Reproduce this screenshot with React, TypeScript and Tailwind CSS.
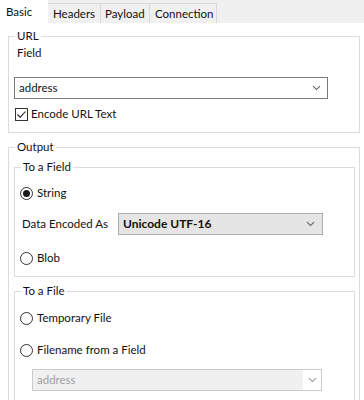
import React from "react";

const Chevron = ({ color = "#606060" }: { color?: string }) => (
  <svg width="9" height="6" viewBox="0 0 9 6" fill="none">
    <path d="M1 1.2 L4.5 4.6 L8 1.2" stroke={color} strokeWidth="1.1" />
  </svg>
);

const Radio = ({ checked, label }: { checked?: boolean; label: string }) => (
  <div className="flex items-center h-[16px]">
    <span className="w-[13px] h-[13px] rounded-full border border-[#333333] bg-white flex items-center justify-center">
      {checked && <span className="w-[7px] h-[7px] rounded-full bg-[#1a1a1a]" />}
    </span>
    <span className="ml-[4px]">{label}</span>
  </div>
);

const Legend = ({ children }: { children: React.ReactNode }) => (
  <legend className="ml-[6px] px-[2px] leading-[16px]">{children}</legend>
);

export default function App() {
  return (
    <div
      className="w-[364px] h-[400px] bg-white text-[11.5px] text-[#111111] overflow-hidden whitespace-nowrap"
      style={{ fontFamily: 'Lato, "Noto Sans", sans-serif' }}
    >
      {/* Tabs */}
      <div className="h-[23px] bg-[#f0f0f0] flex items-end">
        <div className="h-[23px] w-[48px] bg-white flex items-center pl-[6px] leading-[16px]">Basic</div>
        <div className="h-[20px] w-[53px] border-t border-r border-[#d9d9d9] flex items-center pl-[5px]">Headers</div>
        <div className="h-[20px] w-[49px] border-t border-r border-[#d9d9d9] flex items-center pl-[4px]">Payload</div>
        <div className="h-[20px] w-[67px] border-t border-r border-[#d9d9d9] flex items-center pl-[5px]">Connection</div>
      </div>

      {/* URL group */}
      <fieldset className="ml-[8px] mt-[5px] w-[352px] border border-[#dcdcdc] p-0">
        <Legend>URL</Legend>
        <div className="pl-[5px] pb-[10px]">
          <div className="pl-[3px] pt-[1px] leading-[16px]">Field</div>
          <div className="mt-[16px] w-[314px] h-[22px] border border-[#7a7a7a] bg-white flex items-center justify-between pl-[4px] pr-[6px]">
            <span>address</span>
            <Chevron />
          </div>
          <div className="mt-[7px] h-[16px] flex items-center pl-[1px]">
            <span className="w-[13px] h-[13px] border border-[#333333] bg-white flex items-center justify-center">
              <svg width="11" height="11" viewBox="0 0 11 11" fill="none">
                <path d="M1.5 5.5 L4.2 8.2 L9.5 2.5" stroke="#222" strokeWidth="1.1" />
              </svg>
            </span>
            <span className="ml-[3px]">Encode URL Text</span>
          </div>
        </div>
      </fieldset>

      {/* Output group */}
      <fieldset className="ml-[8px] mt-[6px] w-[352px] h-[300px] border border-[#dcdcdc] p-0">
        <Legend>Output</Legend>
        <div className="pl-[5px] pt-[4px]">
          {/* To a Field */}
          <fieldset className="w-[341px] border border-[#dcdcdc] p-0">
            <Legend>To a Field</Legend>
            <div className="pl-[5px] pb-[10px]">
              <div className="mt-[10px]">
                <Radio checked label="String" />
              </div>
              <div className="mt-[12px] flex items-center h-[22px]">
                <span className="ml-[2px] w-[92px]">Data Encoded As</span>
                <div className="ml-[4px] w-[205px] h-[22px] border border-[#adadad] bg-[#e5e5e5] flex items-center justify-between pl-[4px] pr-[7px]">
                  <span className="font-bold text-[12px]">Unicode UTF-16</span>
                  <Chevron />
                </div>
              </div>
              <div className="mt-[15px]">
                <Radio label="Blob" />
              </div>
            </div>
          </fieldset>

          {/* To a File */}
          <fieldset className="mt-[6px] w-[341px] h-[130px] border border-[#dcdcdc] p-0">
            <Legend>To a File</Legend>
            <div className="pl-[5px]">
              <div className="mt-[11px]">
                <Radio label="Temporary File" />
              </div>
              <div className="mt-[16px]">
                <Radio label="Filename from a Field" />
              </div>
              <div className="mt-[11px] ml-[12px] w-[290px] h-[22px] border border-[#cccccc] bg-[#f0f0f0] flex items-center justify-between">
                <span className="pl-[4px] text-[#a0a0a0]">address</span>
                <div className="w-[18px] h-[20px] bg-white flex items-center justify-center">
                  <Chevron color="#9a9a9a" />
                </div>
              </div>
            </div>
          </fieldset>
        </div>
      </fieldset>
    </div>
  );
}
